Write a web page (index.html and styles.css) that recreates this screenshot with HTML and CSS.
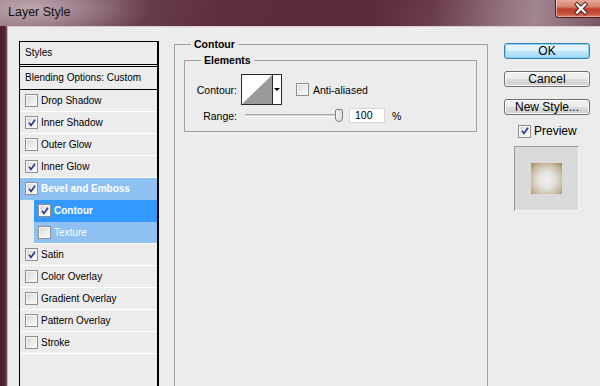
FILE: index.html
```html
<!DOCTYPE html>
<html>
<head>
<meta charset="utf-8">
<link rel="stylesheet" href="styles.css">
</head>
<body>
<div class="window">
  <div class="titlebar">
    <span class="title">Layer Style</span>
    <div class="close">
      <svg width="45" height="18" viewBox="0 0 45 18">
        <path d="M21 4.5 L29 12.5 M29 4.5 L21 12.5" stroke="#4a1818" stroke-width="4.2" stroke-linecap="square"/>
        <path d="M21 4.5 L29 12.5 M29 4.5 L21 12.5" stroke="#ffffff" stroke-width="2.4" stroke-linecap="square"/>
      </svg>
    </div>
  </div>
  <div class="body">
    <div class="frame-edge"></div>
    <div class="client">
      <div class="styles-panel">
        <div class="hdr">Styles</div>
        <div class="blend">Blending Options: Custom</div>
        <div class="row"><span class="cb"></span>Drop Shadow</div>
        <div class="row"><span class="cb"><svg width="10" height="10" viewBox="0 0 10 10"><path d="M2 4.8 L4 7.4 L8 1.8" fill="none" stroke="#25358a" stroke-width="1.6"/></svg></span>Inner Shadow</div>
        <div class="row"><span class="cb"></span>Outer Glow</div>
        <div class="row"><span class="cb"><svg width="10" height="10" viewBox="0 0 10 10"><path d="M2 4.8 L4 7.4 L8 1.8" fill="none" stroke="#25358a" stroke-width="1.6"/></svg></span>Inner Glow</div>
        <div class="row hl bold"><span class="cb"><svg width="10" height="10" viewBox="0 0 10 10"><path d="M2 4.8 L4 7.4 L8 1.8" fill="none" stroke="#25358a" stroke-width="1.6"/></svg></span>Bevel and Emboss</div>
        <div class="row sub active bold"><span class="cb"><svg width="10" height="10" viewBox="0 0 10 10"><path d="M2 4.8 L4 7.4 L8 1.8" fill="none" stroke="#25358a" stroke-width="1.6"/></svg></span>Contour</div>
        <div class="row sub hl"><span class="cb"></span>Texture</div>
        <div class="row"><span class="cb"><svg width="10" height="10" viewBox="0 0 10 10"><path d="M2 4.8 L4 7.4 L8 1.8" fill="none" stroke="#25358a" stroke-width="1.6"/></svg></span>Satin</div>
        <div class="row"><span class="cb"></span>Color Overlay</div>
        <div class="row"><span class="cb"></span>Gradient Overlay</div>
        <div class="row"><span class="cb"></span>Pattern Overlay</div>
        <div class="row"><span class="cb"></span>Stroke</div>
      </div>

      <fieldset class="group outer">
        <legend>Contour</legend>
        <fieldset class="group inner">
          <legend>Elements</legend>
          <div class="form">
            <span class="lbl">Contour:</span>
            <div class="contour-row">
              <div class="swatch">
                <div class="graph">
                  <svg width="30" height="29" viewBox="0 0 30 29"><path d="M1 28 L30 0 L30 29 L1 29 Z" fill="#9a9a9a"/></svg>
                </div>
                <div class="drop"><span class="arrow"></span></div>
              </div>
              <span class="cb"></span>
              <span class="cb-label">Anti-aliased</span>
            </div>
            <span class="lbl">Range:</span>
            <div class="range-row">
              <div class="slider"><div class="track"></div><div class="thumb"></div></div>
              <div class="num">100</div>
              <span class="pct">%</span>
            </div>
          </div>
        </fieldset>
      </fieldset>

      <div class="buttons">
        <div class="btn default">OK</div>
        <div class="btn">Cancel</div>
        <div class="btn">New Style...</div>
        <div class="preview-row">
          <span class="cb"><svg width="10" height="10" viewBox="0 0 10 10"><path d="M2 4.8 L4 7.4 L8 1.8" fill="none" stroke="#25358a" stroke-width="1.6"/></svg></span>
          <span>Preview</span>
        </div>
        <div class="preview-box"><div class="preview-swatch"></div></div>
      </div>
    </div>
  </div>
</div>
</body>
</html>
```

FILE: styles.css
```css
html, body {
  margin: 0;
  padding: 0;
}
body {
  width: 600px;
  height: 386px;
  overflow: hidden;
  font-family: "Liberation Sans", Arial, sans-serif;
  color: #000;
}
.window {
  display: flex;
  flex-direction: column;
  height: 386px;
  width: 600px;
  background: #4c2030;
}
.titlebar {
  height: 26px;
  display: flex;
  align-items: flex-start;
  background:
    radial-gradient(ellipse 120px 36px at 30px 8px, rgba(196,176,184,0.9), rgba(196,176,184,0)),
    linear-gradient(100deg, #84606e 0%, #6a3e4f 22%, #5c2d3e 38%, #5a2b3c 62%, #6a3c4d 72%, #94747f 84%, #a08690 89%, #8c6c78 95%, #7a5464 100%);
}
.title {
  margin: 5px 0 0 8px;
  font-size: 12.5px;
  line-height: 14px;
  color: #111;
}
.close {
  margin-left: auto;
  width: 45px;
  height: 18px;
  box-sizing: border-box;
  border: 1px solid #4e1c20;
  border-top: none;
  border-right: none;
  border-radius: 0 0 0 4px;
  background: linear-gradient(#e8a898 0%, #d8806e 40%, #c0402c 52%, #c44a36 75%, #dc7a66 100%);
  box-shadow: inset 1px 0 0 rgba(255,255,255,0.5), inset 0 -1px 0 rgba(255,255,255,0.35);
}
.close svg {
  display: block;
}
.body {
  flex: 1;
  display: flex;
  min-height: 0;
}
.frame-edge {
  width: 7px;
  background: linear-gradient(90deg, #4a1c2c 0%, #552636 70%, #7a5664 100%);
}
.client {
  flex: 1;
  display: flex;
  align-items: flex-start;
  background: #ececec;
  border-top: 1px solid #d6cace;
  border-left: 1px solid #c9bcc1;
  padding: 10px 0 0 11px;
  overflow: hidden;
}

/* styles list */
.styles-panel {
  width: 137px;
  align-self: stretch;
  margin-top: 4px;
  border: 1px solid #000;
  border-right-width: 2px;
  border-bottom: none;
  font-size: 10px;
}
.hdr {
  height: 22px;
  line-height: 22px;
  padding-left: 5px;
  border-bottom: 1px solid #000;
  margin-bottom: 1px;
}
.blend {
  height: 22px;
  line-height: 22px;
  padding-left: 5px;
  border-top: 1px solid #000;
  border-bottom: 1px solid #000;
}
.row {
  height: 21px;
  display: flex;
  align-items: center;
  padding-left: 5px;
  border-bottom: 1px solid #fff;
  color: #000;
}
.row.sub {
  margin-left: 14px;
  padding-left: 4px;
}
.row.hl {
  background: #8ec0f2;
  border-bottom-color: #8ec0f2;
  color: #fff;
}
.row.active {
  background: #3399ff;
  border-bottom-color: #3399ff;
  color: #fff;
}
.row.sub.hl {
  border-bottom-color: #fff;
}
.bold {
  font-weight: bold;
}
.cb {
  width: 11px;
  height: 11px;
  flex: none;
  border: 1px solid #8e8f8f;
  background: linear-gradient(135deg, #d6d6d6 0%, #eeeeee 60%, #fbfbfb 100%);
  box-shadow: inset 0 0 0 1px #f6f6f6;
  margin-right: 3px;
  display: flex;
  align-items: center;
  justify-content: center;
}
.cb svg {
  display: block;
}

/* group boxes */
.group {
  margin: 0;
  border: 1px solid #a0a0a0;
  min-width: 0;
}
.group legend {
  padding: 0 3px;
  font-size: 10.5px;
  font-weight: bold;
  line-height: 14px;
}
.outer {
  width: 293px;
  margin-left: 15px;
  align-self: stretch;
  margin-bottom: -20px;
  padding: 2px 10px 0 9px;
  box-sizing: content-box;
}
.outer > legend {
  margin-left: 7px;
}
.inner {
  padding: 7px 10px 8px 10px;
}
.inner > legend {
  margin-left: 6px;
}
.form {
  display: grid;
  grid-template-columns: 42px auto;
  column-gap: 4px;
  row-gap: 3px;
  font-size: 10.5px;
}
.lbl {
  align-self: center;
  text-align: right;
}
.contour-row {
  display: flex;
  align-items: center;
}
.swatch {
  width: 41px;
  height: 31px;
  box-sizing: border-box;
  border: 1px solid #2a2a2a;
  display: flex;
  background: #fff;
}
.graph {
  width: 30px;
  border-right: 1px solid #2a2a2a;
  overflow: hidden;
}
.graph svg {
  display: block;
}
.drop {
  flex: 1;
  display: flex;
  align-items: center;
  justify-content: center;
}
.arrow {
  width: 0;
  height: 0;
  border-left: 3px solid transparent;
  border-right: 3px solid transparent;
  border-top: 3px solid #000;
}
.contour-row .cb {
  margin-left: 14px;
  margin-right: 4px;
}
.range-row {
  display: flex;
  align-items: center;
  height: 15px;
}
.slider {
  width: 98px;
  margin-left: 4px;
  display: flex;
  align-items: center;
}
.track {
  flex: 1;
  height: 1px;
  border-top: 1px solid #a6a6a6;
  border-bottom: 1px solid #fbfbfb;
  background: #d6d6d6;
}
.thumb {
  width: 8px;
  height: 13px;
  box-sizing: border-box;
  margin-left: -4px;
  border: 1px solid #7f7f7f;
  border-radius: 2px 2px 4px 4px;
  background: linear-gradient(90deg, #f4f4f4, #dcdcdc);
}
.num {
  margin-left: 6px;
  width: 36px;
  height: 15px;
  box-sizing: border-box;
  border: 1px solid #d8d8d8;
  background: #fff;
  padding-left: 5px;
  line-height: 13px;
}
.pct {
  margin-left: 7px;
}

/* buttons */
.buttons {
  width: 86px;
  margin-left: 16px;
  margin-top: 6px;
  display: flex;
  flex-direction: column;
  font-size: 12px;
}
.btn {
  height: 16px;
  box-sizing: border-box;
  border: 1px solid #707070;
  border-radius: 3px;
  background: linear-gradient(#f2f2f2 0%, #ebebeb 50%, #dddddd 51%, #cfcfcf 100%);
  box-shadow: inset 0 0 0 1px #fbfbfb;
  text-align: center;
  line-height: 14px;
  margin-bottom: 12px;
}
.btn.default {
  border-color: #3c7fb1;
  background: linear-gradient(#eaf6fd 0%, #d9f0fc 50%, #bee6fd 51%, #a7d9f5 100%);
  box-shadow: inset 0 0 0 1px #7ed4f8;
}
.preview-row {
  display: flex;
  align-items: center;
  height: 14px;
  margin-top: -3px;
  padding-left: 14px;
}
.preview-row .cb {
  margin-right: 3px;
}
.preview-box {
  margin: 8px 0 0 10px;
  width: 65px;
  height: 65px;
  box-sizing: border-box;
  border-top: 1px solid #9a9a9a;
  border-left: 1px solid #9a9a9a;
  border-right: 1px solid #f6f6f6;
  border-bottom: 1px solid #f6f6f6;
  background: #dadada;
  display: flex;
  align-items: center;
  justify-content: center;
}
.preview-swatch {
  width: 31px;
  height: 31px;
  background: radial-gradient(ellipse 70% 70% at 50% 55%, #f2f2f0 0%, #e2e0dc 40%, #c8baa0 75%, #a88e5e 100%);
}
```
